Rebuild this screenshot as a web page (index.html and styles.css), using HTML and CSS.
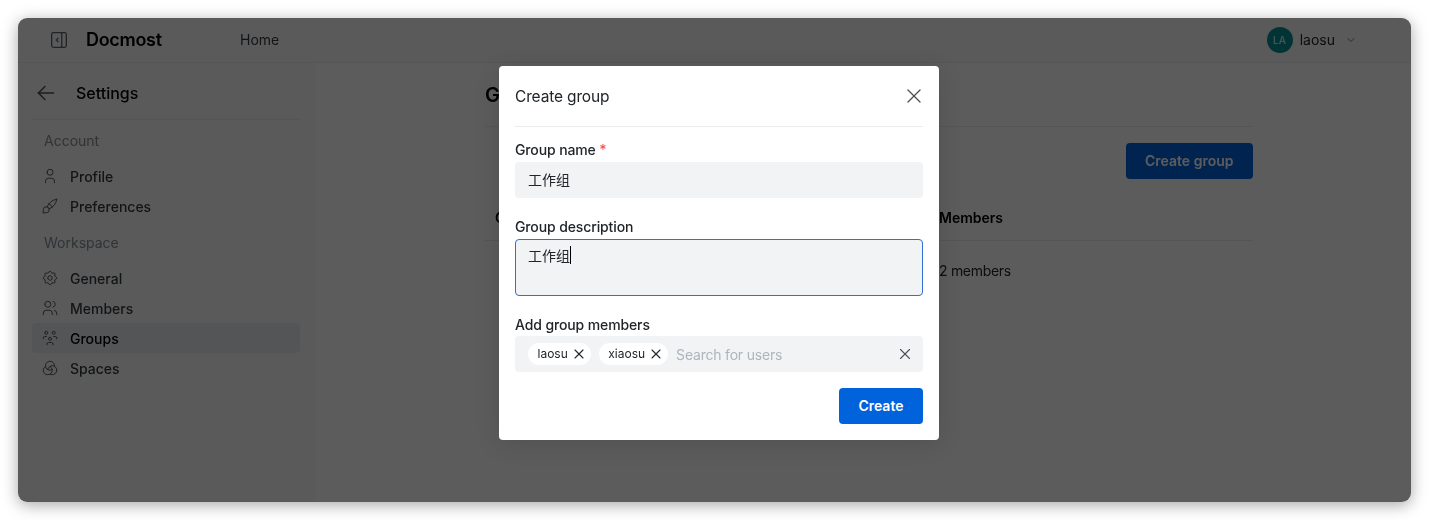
FILE: index.html
```html
<!DOCTYPE html>
<html lang="en">
<head>
<meta charset="utf-8">
<title>Create group</title>
<link rel="stylesheet" href="styles.css">
</head>
<body>
<div class="window">
  <header class="topbar">
    <div class="brand">
      <svg class="icon toggle" viewBox="0 0 24 24"><rect x="4" y="4" width="16" height="16" rx="2"/><path d="M15 4v16"/><path d="M11 10l-2 2l2 2"/></svg>
      <span class="logo">Docmost</span>
      <a class="home">Home</a>
    </div>
    <div class="user">
      <span class="avatar">LA</span>
      <span class="username">laosu</span>
      <svg class="icon caret" viewBox="0 0 24 24"><path d="M6 9l6 6l6 -6"/></svg>
    </div>
  </header>
  <div class="shell">
    <aside class="sidebar">
      <div class="side-head">
        <svg class="icon back" viewBox="0 0 24 24"><path d="M5 12h14"/><path d="M5 12l6 6"/><path d="M5 12l6 -6"/></svg>
        <span class="side-title">Settings</span>
      </div>
      <div class="section">Account</div>
      <a class="item"><svg class="icon" viewBox="0 0 24 24"><path d="M8 7a4 4 0 1 0 8 0a4 4 0 0 0 -8 0"/><path d="M6 21v-2a4 4 0 0 1 4 -4h4a4 4 0 0 1 4 4v2"/></svg>Profile</a>
      <a class="item"><svg class="icon" viewBox="0 0 24 24"><path d="M3 21v-4a4 4 0 1 1 4 4h-4"/><path d="M21 3a16 16 0 0 0 -12.8 10.2"/><path d="M21 3a16 16 0 0 1 -10.2 12.8"/><path d="M10.6 9a9 9 0 0 1 4.4 4.4"/></svg>Preferences</a>
      <div class="section second">Workspace</div>
      <a class="item"><svg class="icon" viewBox="0 0 24 24"><path d="M10.325 4.317c.426 -1.756 2.924 -1.756 3.35 0a1.724 1.724 0 0 0 2.573 1.066c1.543 -.94 3.31 .826 2.37 2.37a1.724 1.724 0 0 0 1.065 2.572c1.756 .426 1.756 2.924 0 3.35a1.724 1.724 0 0 0 -1.066 2.573c.94 1.543 -.826 3.31 -2.37 2.37a1.724 1.724 0 0 0 -2.572 1.065c-.426 1.756 -2.924 1.756 -3.35 0a1.724 1.724 0 0 0 -2.573 -1.066c-1.543 .94 -3.31 -.826 -2.37 -2.37a1.724 1.724 0 0 0 -1.065 -2.572c-1.756 -.426 -1.756 -2.924 0 -3.35a1.724 1.724 0 0 0 1.066 -2.573c-.94 -1.543 .826 -3.31 2.37 -2.37c1 .608 2.296 .07 2.572 -1.065"/><path d="M9 12a3 3 0 1 0 6 0a3 3 0 0 0 -6 0"/></svg>General</a>
      <a class="item"><svg class="icon" viewBox="0 0 24 24"><path d="M5 7a4 4 0 1 0 8 0a4 4 0 1 0 -8 0"/><path d="M3 21v-2a4 4 0 0 1 4 -4h4a4 4 0 0 1 4 4v2"/><path d="M16 3.13a4 4 0 0 1 0 7.75"/><path d="M21 21v-2a4 4 0 0 0 -3 -3.85"/></svg>Members</a>
      <a class="item active"><svg class="icon" viewBox="0 0 24 24"><path d="M10 13a2 2 0 1 0 4 0a2 2 0 0 0 -4 0"/><path d="M8 21v-1a2 2 0 0 1 2 -2h4a2 2 0 0 1 2 2v1"/><path d="M15 5a2 2 0 1 0 4 0a2 2 0 0 0 -4 0"/><path d="M17 10h2a2 2 0 0 1 2 2v1"/><path d="M5 5a2 2 0 1 0 4 0a2 2 0 0 0 -4 0"/><path d="M3 13v-1a2 2 0 0 1 2 -2h2"/></svg>Groups</a>
      <a class="item"><svg class="icon" viewBox="0 0 24 24"><path d="M6.045 9.777a6 6 0 1 0 5.951 .023"/><path d="M11.997 20.196a6 6 0 1 0 -2.948 -5.97"/><path d="M17.95 9.785q .05 -.386 .05 -.785a6 6 0 1 0 -3.056 5.23"/></svg>Spaces</a>
    </aside>
    <main class="main">
      <div class="content">
        <h1 class="page-title">Groups</h1>
        <div class="actions"><button class="btn">Create group</button></div>
        <div class="table">
          <div class="row head"><span class="cell-name">Group</span><span>Members</span></div>
          <div class="row"><span class="cell-name indent">工作组</span><span class="count">2 members</span></div>
        </div>
      </div>
    </main>
  </div>
  <div class="overlay"></div>
  <section class="modal">
    <div class="modal-head">
      <span class="modal-title">Create group</span>
      <svg class="icon close" viewBox="0 0 24 24"><path d="M18 6l-12 12"/><path d="M6 6l12 12"/></svg>
    </div>
    <label class="label first">Group name <span class="req">*</span></label>
    <div class="field">工作组</div>
    <label class="label">Group description</label>
    <div class="field area">工作组<span class="cursor"></span></div>
    <label class="label last">Add group members</label>
    <div class="field multi">
      <span class="pill">laosu<svg class="icon" viewBox="0 0 24 24"><path d="M18 6l-12 12"/><path d="M6 6l12 12"/></svg></span>
      <span class="pill">xiaosu<svg class="icon" viewBox="0 0 24 24"><path d="M18 6l-12 12"/><path d="M6 6l12 12"/></svg></span>
      <span class="placeholder">Search for users</span>
      <svg class="icon clear" viewBox="0 0 24 24"><path d="M18 6l-12 12"/><path d="M6 6l12 12"/></svg>
    </div>
    <div class="modal-foot"><button class="btn">Create</button></div>
  </section>
</div>
</body>
</html>
```
FILE: styles.css
```css
* { box-sizing: border-box; }
html, body { height: 100%; }
body {
  margin: 0;
  padding: 18px;
  height: 520px;
  overflow: hidden;
  background: #fff;
  color: #000;
  font: 14px/20px Inter, "Noto Sans CJK SC", sans-serif;
}
.icon {
  fill: none;
  stroke: currentColor;
  stroke-width: 1.5;
  stroke-linecap: round;
  stroke-linejoin: round;
  flex: none;
}
.window {
  position: relative;
  height: 484px;
  display: flex;
  flex-direction: column;
  border-radius: 9px;
  overflow: hidden;
  background: #fff;
  box-shadow: 0 3px 16px rgba(0,0,0,.35);
  filter: blur(.3px);
}
.topbar {
  height: 45px;
  flex: none;
  display: flex;
  justify-content: space-between;
  align-items: center;
  padding: 0 54px 0 30px;
  background: #f8f9fa;
  border-bottom: 1px solid #e9ecef;
}
.brand { display: flex; align-items: center; }
.toggle { width: 22px; height: 22px; color: #5c636a; stroke-width: 1.4; }
.logo { margin-left: 16px; font-size: 18px; font-weight: 600; width: 154px; letter-spacing: -.3px; }
.home { color: #343a40; }
.user { display: flex; align-items: center; }
.avatar {
  width: 26px; height: 26px; border-radius: 50%;
  background: #0b9194; color: #a5e8e8;
  display: flex; align-items: center; justify-content: center;
  font-size: 10px; font-weight: 600;
  letter-spacing: .3px;
}
.username { margin-left: 7px; color: #212529; }
.caret { width: 12px; height: 12px; margin-left: 10px; color: #495057; }
.shell { flex: 1; display: flex; min-height: 0; }
.sidebar {
  width: 298px;
  flex: none;
  padding: 0 16px 0 14px;
  background: #f8f9fa;
  color: #343a40;
}
.side-head {
  height: 57px;
  display: flex;
  align-items: center;
  padding: 3px 0 0 1px;
  border-bottom: 1px solid #e9ecef;
}
.back { width: 26px; height: 26px; color: #495057; stroke-width: 1.3; }
.side-title { margin-left: 17px; font-size: 16px; font-weight: 500; color: #000; }
.section { margin: 11px 0 10px 12px; color: #868e96; }
.section.second { margin-top: 12px; }
.item {
  height: 30px;
  display: flex;
  align-items: center;
  gap: 11px;
  padding: 2px 0 0 9px;
  border-radius: 4px;
  font-weight: 450;
  color: #343a40;
}
.item .icon { width: 18px; height: 18px; margin-top: -2px; color: #495057; stroke-width: 1.25; }
.item.active { background: #e9ecef; color: #000; }
.main { flex: 1; background: #fff; padding-left: 169px; }
.content { width: 768px; }
.page-title {
  margin: 0;
  height: 64px;
  padding-top: 18px;
  font-size: 20px;
  line-height: 28px;
  font-weight: 600;
  border-bottom: 1px solid #e9ecef;
}
.actions { display: flex; justify-content: flex-end; margin-top: 16px; }
.btn {
  height: 36px;
  padding: 0 19.5px;
  border: 0;
  border-radius: 4px;
  background: #0063db;
  color: #fff;
  font: 600 14px/36px Inter, sans-serif;
}
.table { margin-top: 20px; }
.row {
  display: flex;
  padding-left: 10px;
  height: 60px;
  align-items: center;
  color: #212529;
}
.row.head { height: 42px; padding-bottom: 4px; font-weight: 600; color: #000; border-bottom: 1px solid #e9ecef; }
.cell-name { width: 444px; }
.indent { padding-left: 12px; }
.count { letter-spacing: -.3px; }
.overlay { position: absolute; inset: 0; background: rgba(0,0,0,.64); }
.modal {
  position: absolute;
  left: 481px;
  top: 48px;
  width: 440px;
  height: 374px;
  padding: 0 16px;
  background: #fff;
  border-radius: 4px;
  box-shadow: 0 4px 24px rgba(0,0,0,.12);
  color: #212529;
}
.modal-head {
  height: 61px;
  display: flex;
  justify-content: space-between;
  align-items: center;
  border-bottom: 1px solid #e9ecef;
}
.modal-title { font-size: 15.5px; letter-spacing: -.15px; padding-top: 1px; }
.close { width: 24px; height: 24px; color: #495057; margin-right: -3px; stroke-width: 1.25; }
.label { display: block; margin-top: 21px; height: 20px; line-height: 16px; font-weight: 450; letter-spacing: -.12px; }
.label.first { margin-top: 15px; }
.label.last { height: 19px; }
.req { color: #fa5252; }
.field {
  height: 36px;
  padding: 0 13px 2px;
  display: flex;
  align-items: center;
  background: #f1f3f5;
  border-radius: 4px;
  font-family: "Noto Sans CJK SC", sans-serif;
}
.field.area {
  height: 57px;
  padding: 5px 12px 0;
  align-items: flex-start;
  border: 1px solid #2f6fd6;
}
.cursor { width: 1px; height: 18px; margin-top: 1px; background: #000; }
.multi { gap: 8px; padding-bottom: 0; font-family: Inter, sans-serif; font-size: 12px; }
.pill {
  height: 22px;
  padding: 0 4px 0 9.5px;
  display: flex;
  align-items: center;
  gap: 3px;
  background: #fff;
  border-radius: 11px;
  color: #212529;
}
.pill .icon { width: 16px; height: 16px; stroke-width: 1.6; }
.placeholder { font-size: 14px; color: #adb5bd; flex: 1; padding-top: 2px; letter-spacing: -.2px; }
.clear { width: 18px; height: 18px; margin-right: -4px; color: #495057; }
.modal-foot { display: flex; justify-content: flex-end; margin-top: 16px; }
```
